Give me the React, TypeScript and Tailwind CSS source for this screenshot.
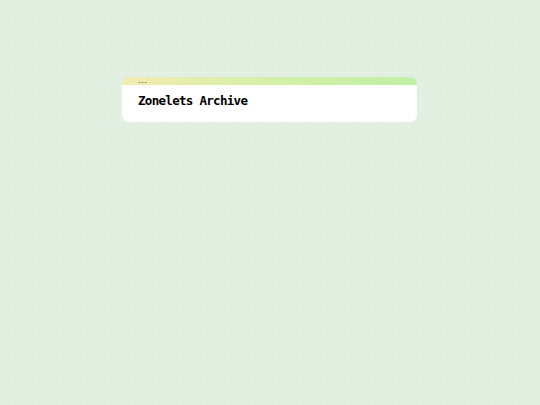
export default function App() {
  return (
    <div
      className="w-[540px] h-[405px] bg-[#e0efe0] pt-[77px] pl-[122px]"
      style={{
        backgroundImage:
          "linear-gradient(rgba(255,255,255,0.18) 1px, transparent 1px), linear-gradient(90deg, rgba(255,255,255,0.18) 1px, transparent 1px)",
        backgroundSize: "12px 12px",
      }}
    >
      <div className="w-[295px] bg-white rounded-[7px] overflow-hidden">
        <div className="h-[8px] bg-gradient-to-r from-[#f3ebb0] via-[#d4f0a8] to-[#bff0a4] relative">
          <span className="absolute left-[16px] top-[4px] text-[5px] leading-[1px] font-bold text-[#222] font-['DejaVu_Sans_Mono',monospace]">
            ...
          </span>
        </div>
        <div className="pl-[16px] pt-[8px] pb-[13px]">
          <h1 className="text-[12.5px] leading-[16px] tracking-[-0.7px] font-bold text-black font-['DejaVu_Sans_Mono',monospace]">
            Zonelets Archive
          </h1>
        </div>
      </div>
    </div>
  );
}
